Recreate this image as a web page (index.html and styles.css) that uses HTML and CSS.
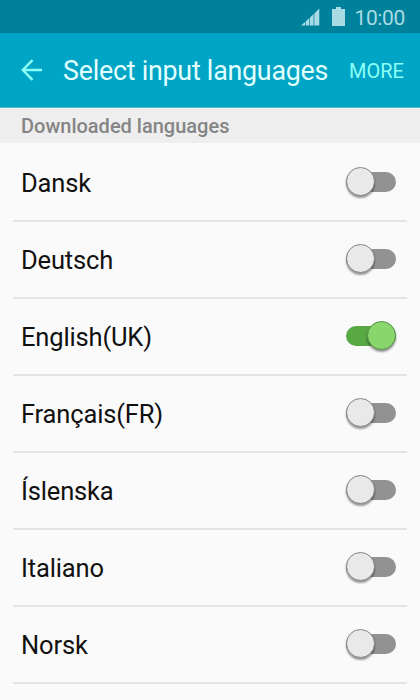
FILE: index.html
```html
<!DOCTYPE html>
<html lang="en">
<head>
<meta charset="utf-8">
<title>Select input languages</title>
<link rel="stylesheet" href="styles.css">
</head>
<body>
<div class="status">
  <svg class="signal" width="19" height="18" viewBox="0 0 19 18"><path d="M0 17.500 4 14v3.500zM4.700 13.500l3.600-3.500v7.500H4.700zM9 9.500l3.600-3.500v11.500H9zM13.300 5.500l5-5v17h-5z"/></svg>
  <svg class="battery" width="13" height="19" viewBox="0 0 13 19"><path d="M4 0h5v2h4v17H0V2h4z"/></svg>
  <span class="clock">10:00</span>
</div>
<header class="bar">
  <svg class="back" width="22" height="22" viewBox="0 0 22 22"><path d="M11.500 1.200 1.800 11l9.700 9.800M2 11h19"/></svg>
  <h1 class="title">Select input languages</h1>
  <span class="more">MORE</span>
</header>
<h2 class="section">Downloaded languages</h2>
<ul class="list">
  <li class="row"><span class="name">Dansk</span><span class="switch"></span></li>
  <li class="row"><span class="name">Deutsch</span><span class="switch"></span></li>
  <li class="row"><span class="name">English(UK)</span><span class="switch on"></span></li>
  <li class="row"><span class="name">Français(FR)</span><span class="switch"></span></li>
  <li class="row"><span class="name">Íslenska</span><span class="switch"></span></li>
  <li class="row"><span class="name">Italiano</span><span class="switch"></span></li>
  <li class="row"><span class="name">Norsk</span><span class="switch"></span></li>
</ul>
</body>
</html>
```
FILE: styles.css
```css
*, *::after { box-sizing: border-box; margin: 0; padding: 0; }
body {
  width: 420px;
  height: 700px;
  overflow: hidden;
  background: #fafafa;
  font-family: Roboto, "Liberation Sans", sans-serif;
  color: #111;
}
.status {
  display: flex;
  height: 33px;
  padding: 7px 15px 0 0;
  justify-content: flex-end;
  align-items: flex-start;
  background: #00819b;
  color: #a8dbe3;
}
.status svg { fill: #a8dbe3; }
.signal { margin: 1px 12px 0 0; }
.battery { margin-right: 9px; }
.clock { font-size: 21px; line-height: 23px; letter-spacing: -.35px; white-space: nowrap; }
.bar {
  display: flex;
  height: 75px;
  padding: 2px 16px 0 21px;
  align-items: center;
  background: #00a5c5;
  border-bottom: 1px solid #55b9cc;
}
.back { flex: none; margin-top: -2px; fill: none; stroke: #8cfff8; stroke-width: 2.4; }
.title {
  margin-left: 20px;
  font-size: 26.8px;
  font-weight: 400;
  letter-spacing: -.23px;
  line-height: 36px;
  white-space: nowrap;
  color: #e2ffff;
}
.more { margin-left: auto; font-size: 20px; line-height: 36px; color: #8cfff8; }
.section {
  height: 35px;
  padding-left: 21px;
  background: #eee;
  color: #858585;
  font-size: 20px;
  font-weight: 500;
  line-height: 36px;
}
.list { padding: 2px 13px 0; list-style: none; }
.row {
  display: flex;
  height: 77px;
  padding: 0 11.5px 0 8px;
  align-items: center;
  justify-content: space-between;
  border-bottom: 2px solid #e4e4e4;
}
.name { padding-top: 1px; font-size: 25.5px; letter-spacing: -.16px; line-height: 34px; white-space: nowrap; }
.switch {
  position: relative;
  width: 50px;
  height: 20px;
  margin-top: -1px;
  border-radius: 10px;
  background: #929292;
}
.switch::after {
  content: "";
  position: absolute;
  top: -5px;
  left: 0;
  width: 29px;
  height: 29px;
  border: 1px solid #858585;
  border-radius: 50%;
  background: #e9e9e9;
  box-shadow: 0 2px 2px rgba(0, 0, 0, .4);
}
.switch.on { background: #58a844; }
.switch.on::after { left: 21px; border-color: #58934a; background: #88d66c; }
```
